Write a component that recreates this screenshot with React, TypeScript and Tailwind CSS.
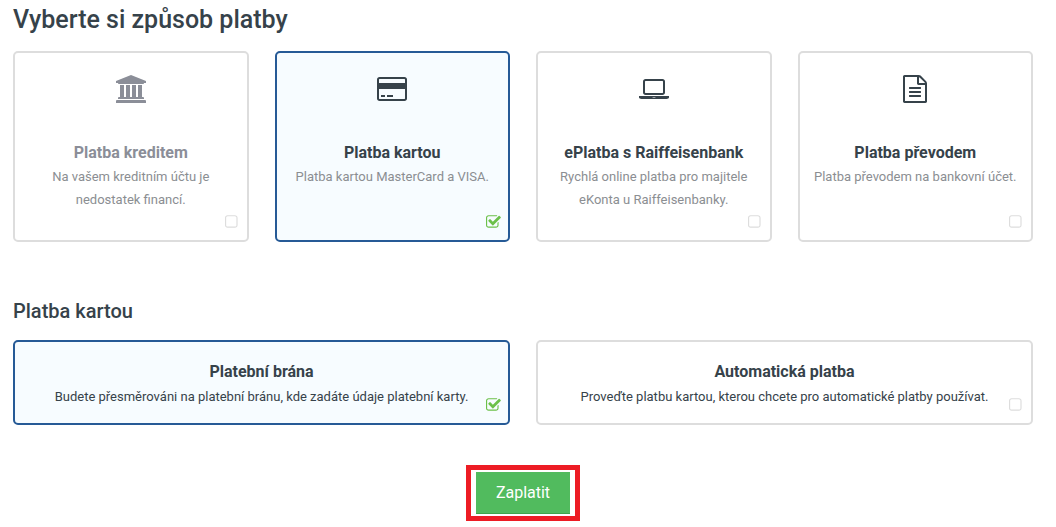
import React, { useState } from "react";
import clsx from "clsx";

type Icon = { viewBox: string; path: string; className: string };

const icons: Record<string, Icon> = {
    bank: {
        viewBox: "0 0 1920 1792",
        className: "w-[30px] h-7",
        path: "M960 0l960 384v128h-128q0 26-20.500 45t-48.500 19h-1526q-28 0-48.500-19t-20.500-45h-128v-128zM256 640h256v768h128v-768h256v768h128v-768h256v768h128v-768h256v768h59q28 0 48.500 19t20.500 45v64h-1664v-64q0-26 20.500-45t48.500-19h59zM1851 1600q28 0 48.500 19t20.500 45v128h-1920v-128q0-26 20.500-45t48.500-19z",
    },
    card: {
        viewBox: "0 0 1920 1792",
        className: "w-[30px] h-7",
        path: "M1760 128q66 0 113 47t47 113v1216q0 66-47 113t-113 47h-1600q-66 0-113-47t-47-113v-1216q0-66 47-113t113-47h1600zM160 256q-13 0-22.500 9.500t-9.500 22.500v224h1664v-224q0-13-9.500-22.500t-22.500-9.500h-1600zM1760 1536q13 0 22.500-9.500t9.500-22.500v-608h-1664v608q0 13 9.500 22.500t22.500 9.500h1600zM256 1408v-128h256v128h-256zM640 1408v-128h384v128h-384z",
    },
    laptop: {
        viewBox: "0 -128 1920 1792",
        className: "w-[30px] h-7",
        path: "M416 1152q-66 0-113-47t-47-113v-704q0-66 47-113t113-47h1088q66 0 113 47t47 113v704q0 66-47 113t-113 47h-1088zM384 288v704q0 13 9.500 22.500t22.500 9.500h1088q13 0 22.500-9.500t9.500-22.500v-704q0-13-9.500-22.500t-22.500-9.500h-1088q-13 0-22.500 9.500t-9.500 22.500zM1760 1216h160v96q0 40-47 68t-113 28h-1600q-66 0-113-28t-47-68v-96h1760zM1040 1312q16 0 16-16t-16-16h-160q-16 0-16 16t16 16h160z",
    },
    file: {
        viewBox: "0 0 1536 1792",
        className: "w-6 h-7",
        path: "M1468 380q28 28 48 76t20 88v1152q0 40-28 68t-68 28h-1344q-40 0-68-28t-28-68v-1600q0-40 28-68t68-28h896q40 0 88 20t76 48zM1024 136v376h376q-10-29-22-41l-313-313q-12-12-41-22zM1408 1664v-1024h-416q-40 0-68-28t-28-68v-416h-768v1536h1280zM384 800q0-14 9-23t23-9h704q14 0 23 9t9 23v64q0 14-9 23t-23 9h-704q-14 0-23-9t-9-23v-64zM1120 1024q14 0 23 9t9 23v64q0 14-9 23t-23 9h-704q-14 0-23-9t-9-23v-64q0-14 9-23t23-9h704zM1120 1280q14 0 23 9t9 23v64q0 14-9 23t-23 9h-704q-14 0-23-9t-9-23v-64q0-14 9-23t23-9h704z",
    },
    checked: {
        viewBox: "64 0 1680 1792",
        className: "w-[15px] h-4",
        path: "M1472 930v318q0 119-84.500 203.500t-203.500 84.500h-832q-119 0-203.500-84.500t-84.500-203.500v-832q0-119 84.500-203.500t203.500-84.500h832q63 0 117 25 15 7 18 23 3 17-9 29l-49 49q-10 10-23 10-3 0-9-2-23-6-45-6h-832q-66 0-113 47t-47 113v832q0 66 47 113t113 47h832q66 0 113-47t47-113v-254q0-13 9-22l64-64q10-10 23-10 6 0 12 3 20 8 20 29zM1703 441l-814 814q-24 24-57 24t-57-24l-430-430q-24-24-24-57t24-57l110-110q24-24 57-24t57 24l263 263 647-647q24-24 57-24t57 24l110 110q24 24 24 57t-24 57z",
    },
    unchecked: {
        viewBox: "192 0 1680 1792",
        className: "w-[15px] h-4",
        path: "M1312 256h-832q-66 0-113 47t-47 113v832q0 66 47 113t113 47h832q66 0 113-47t47-113v-832q0-66-47-113t-113-47zM1600 416v832q0 119-84.500 203.500t-203.500 84.500h-832q-119 0-203.500-84.500t-84.500-203.500v-832q0-119 84.500-203.500t203.500-84.500h832q119 0 203.500 84.500t84.500 203.500z",
    },
};

const Glyph: React.FC<{ name: string }> = ({ name }) => (
    <svg
        viewBox={icons[name].viewBox}
        className={icons[name].className}
        fill="currentColor"
        aria-hidden="true"
        fillRule={name === "checked" ? "nonzero" : "evenodd"}
    >
        <path d={icons[name].path} />
    </svg>
);

type OptionProps = {
    group: string;
    value: string;
    title: string;
    text: string;
    icon?: string;
    disabled?: boolean;
    selected: boolean;
    onSelect: (value: string) => void;
};

const Option: React.FC<OptionProps> = ({
    group,
    value,
    title,
    text,
    icon,
    disabled,
    selected,
    onSelect,
}) => (
    <label
        className={clsx(
            "relative flex flex-col items-center rounded-[5px] border-2 px-3 text-center",
            icon ? "pt-[22px] pb-[29px]" : "gap-px pt-[18px] pb-[15px]",
            selected ? "border-[#265a96] bg-[#f7fcff]" : "border-[#dddddd]",
            disabled ? "text-[#8b8e98]" : "cursor-pointer text-[#36424a]"
        )}
    >
        {icon && (
            <span className="mb-[38px]">
                <Glyph name={icon} />
            </span>
        )}
        <span className="text-base leading-6 font-bold">{title}</span>
        <span
            className={clsx(
                "text-[13px] leading-[23px]",
                icon && "text-[#8b8e92]"
            )}
        >
            {text}
        </span>
        <input
            type="radio"
            name={group}
            value={value}
            checked={selected}
            disabled={disabled}
            onChange={() => onSelect(value)}
            className="absolute right-[7px] bottom-[10px] h-4 w-[15px] appearance-none"
        />
        <span
            className={clsx(
                "pointer-events-none absolute right-[7px] bottom-[10px]",
                selected ? "text-[#6cc04a]" : "text-[#dddddd]"
            )}
        >
            <Glyph name={selected ? "checked" : "unchecked"} />
        </span>
    </label>
);

const methods = [
    {
        value: "credit",
        icon: "bank",
        title: "Platba kreditem",
        text: "Na vašem kreditním účtu je nedostatek financí.",
        disabled: true,
    },
    {
        value: "card",
        icon: "card",
        title: "Platba kartou",
        text: "Platba kartou MasterCard a VISA.",
    },
    {
        value: "eplatba",
        icon: "laptop",
        title: "ePlatba s Raiffeisenbank",
        text: "Rychlá online platba pro majitele eKonta u Raiffeisenbanky.",
    },
    {
        value: "transfer",
        icon: "file",
        title: "Platba převodem",
        text: "Platba převodem na bankovní účet.",
    },
];

const cardModes = [
    {
        value: "gateway",
        title: "Platební brána",
        text: "Budete přesměrováni na platební bránu, kde zadáte údaje platební karty.",
    },
    {
        value: "auto",
        title: "Automatická platba",
        text: "Proveďte platbu kartou, kterou chcete pro automatické platby používat.",
    },
];

const App: React.FC = () => {
    const [method, setMethod] = useState("card");
    const [mode, setMode] = useState("gateway");

    return (
        <form
            className="bg-white pt-1 pr-[23px] pb-[6px] pl-[13px] font-['Roboto',sans-serif] text-[#36424a]"
            onSubmit={(e) => e.preventDefault()}
        >
            <h1 className="text-[25px] leading-8 font-medium">
                Vyberte si způsob platby
            </h1>
            <div className="mt-[15px] grid grid-cols-4 gap-[26px]">
                {methods.map((m) => (
                    <Option
                        key={m.value}
                        group="method"
                        {...m}
                        selected={method === m.value}
                        onSelect={setMethod}
                    />
                ))}
            </div>
            <h2 className="mt-[55px] text-xl leading-7 font-medium">
                Platba kartou
            </h2>
            <div className="mt-[15px] grid grid-cols-2 gap-[26px]">
                {cardModes.map((m) => (
                    <Option
                        key={m.value}
                        group="mode"
                        {...m}
                        selected={mode === m.value}
                        onSelect={setMode}
                    />
                ))}
            </div>
            <div className="mt-10 flex justify-center">
                <div className="border-5 border-[#ed1c24] px-[5px] py-[2px]">
                    <button
                        type="submit"
                        className="block cursor-pointer border-b border-[#3fa34b] bg-[#51bb5e] px-5 pt-[9px] pb-2 text-base leading-6 text-white"
                    >
                        Zaplatit
                    </button>
                </div>
            </div>
        </form>
    );
};

export default App;
